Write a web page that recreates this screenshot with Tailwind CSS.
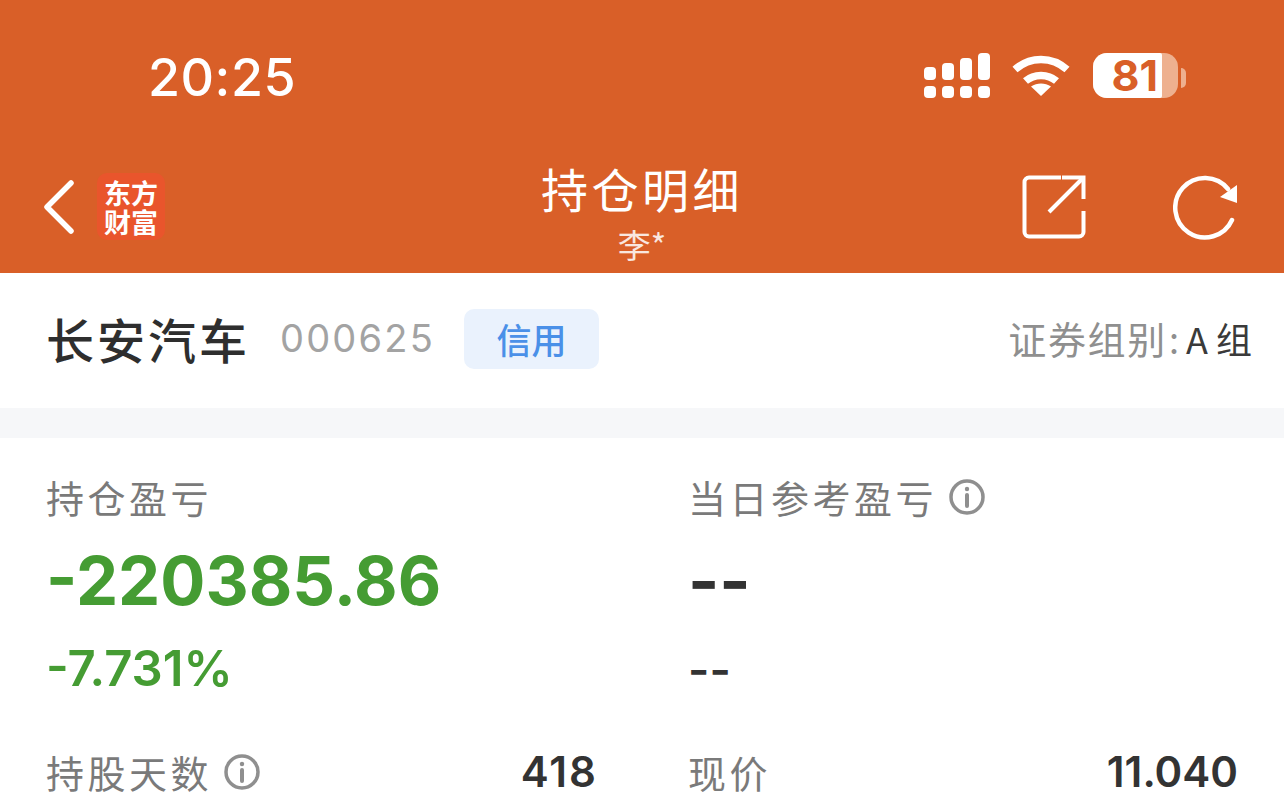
<!DOCTYPE html>
<html lang="zh-CN">
<head>
<meta charset="utf-8">
<script src="https://cdn.jsdelivr.net/npm/@tailwindcss/browser@4"></script>
</head>
<body class="bg-white">
<div class="w-[1284px] h-[812px] overflow-hidden bg-white font-['Inter','Noto_Sans_CJK_SC',sans-serif] text-[#333]">
  <header class="h-[273px] bg-[#d95f28] text-white">
    <div class="h-[150px] relative flex items-start">
      <span class="ml-[148px] mt-[46px] text-[52px] leading-[64px] font-medium tracking-[0.5px]">20:25</span>
      <div class="ml-auto mr-[98px] mt-[53px] flex items-start">
        <svg width="66" height="46" viewBox="0 0 66 46" class="block" fill="#fff">
          <rect x="0" y="14" width="12" height="13" rx="4"/><rect x="18" y="10" width="12" height="17" rx="4"/><rect x="36" y="5" width="12" height="22" rx="4"/><rect x="54" y="0" width="12" height="27" rx="4"/>
          <rect x="0" y="33" width="12" height="12" rx="4"/><rect x="18" y="33" width="12" height="12" rx="4"/><rect x="36" y="33" width="12" height="12" rx="4"/><rect x="54" y="33" width="12" height="12" rx="4"/>
        </svg>
        <svg width="58" height="44" viewBox="0 0 58 44" class="block ml-[22px]" fill="none" stroke="#fff" stroke-width="7.5">
          <path d="M3 16.5C18 3 40 3 55 16.5"/><path d="M13.5 28C22 20.5 36 20.5 44.5 28"/><path d="M29 43L19 33.5C25 29.5 33 29.5 39 33.5Z" fill="#fff" stroke="none"/>
        </svg>
        <div class="ml-[23px] w-[85px] h-[45px] rounded-[14px] flex bg-[#eeb08f]">
          <div class="w-[69px] h-full bg-white rounded-l-[14px] rounded-r-[2px] flex items-center justify-end pr-[4px] text-[#d95f28] text-[43px] leading-[45px] font-bold">81</div>
        </div>
        <div class="ml-[3px] mt-[15px] w-[5px] h-[20px] rounded-r-full bg-[#eeb08f]"></div>
      </div>
    </div>
    <nav class="h-[123px] relative flex items-start">
      <svg width="32" height="54" viewBox="0 0 32 54" class="block ml-[43px] mt-[30px]" fill="none" stroke="#fff" stroke-width="5.5" stroke-linecap="round" stroke-linejoin="round"><path d="M28 3L4 27L28 51"/></svg>
      <div class="ml-[22px] mt-[23px] w-[68px] h-[67px] rounded-[10px] bg-[#e9552c] flex items-center justify-center text-center text-[27px] leading-[29px] font-bold font-['Noto_Sans_CJK_SC',sans-serif]">东方<br>财富</div>
      <div class="absolute left-0 right-0 top-[6px] text-center">
        <div class="text-[47px] leading-[64px] font-['Noto_Sans_CJK_SC',sans-serif] tracking-[3.500px]">持仓明细</div>
        <div class="mt-[5px] text-[33px] leading-[38px] text-white/85 font-['Noto_Sans_CJK_SC',sans-serif]">李*</div>
      </div>
      <svg width="64" height="64" viewBox="0 0 64 64" class="block ml-auto mt-[25px]" fill="none" stroke="#fff" stroke-width="4">
        <path d="M39 2.500H7A4.500 4.500 0 0 0 2.500 7V57A4.500 4.500 0 0 0 7 61.500H57A4.500 4.500 0 0 0 61.500 57V36"/>
        <path d="M27 37L60 4"/><path d="M40 2.500H61.500V24"/>
      </svg>
      <svg width="66" height="66" viewBox="0 0 66 66" class="block ml-[87px] mr-[45px] mt-[25px]" fill="none" stroke="#fff" stroke-width="4.500">
        <path d="M55 14A29.700 29.700 0 1 0 59 45" stroke-linecap="round"/>
        <path d="M64 10V28L47 22Z" fill="#fff" stroke="none"/>
      </svg>
    </nav>
  </header>

  <section class="h-[135px] pl-[46px] pr-[32px] flex items-center pb-[5px]">
    <h1 class="text-[48px] leading-[64px] font-medium font-['Noto_Sans_CJK_SC',sans-serif] text-[#2e2e2e] tracking-[3px]">长安汽车</h1>
    <span class="ml-[30px] text-[38px] leading-[48px] text-[#a3a3a3] tracking-[2.200px]">000625</span>
    <span class="ml-[29px] mt-[2px] w-[135px] h-[60px] rounded-[10px] bg-[#eaf2fd] text-[#4a90e8] text-[35px] leading-[60px] text-center font-medium font-['Noto_Sans_CJK_SC',sans-serif]">信用</span>
    <span class="ml-auto flex items-center text-[36px] leading-[48px] text-[#8f8f8f] font-['Noto_Sans_CJK_SC',sans-serif]"><span class="text-[38px] tracking-[1.700px]">证券组别</span><span class="ml-[2px] mr-[7px]">:</span><span class="text-[#3a3a3a]">A 组</span></span>
  </section>
  <div class="h-[30px] bg-[#f6f7f9]"></div>

  <section class="grid grid-cols-[642px_1fr] pl-[46px] pr-[46px] pt-[32px]">
    <div class="pr-[90px]">
      <div class="h-[54px] text-[38px] leading-[54px] text-[#7a7a7a] font-['Noto_Sans_CJK_SC',sans-serif] tracking-[3.500px]">持仓盈亏</div>
      <div class="h-[82px] mt-[16px] text-[67px] leading-[82px] font-bold text-[#459c33]">-220385.86</div>
      <div class="h-[52px] mt-[21px] text-[49px] leading-[52px] font-semibold text-[#459c33]">-7.731%</div>
      <div class="mt-[50px] flex items-center justify-between h-[54px]">
        <span class="flex items-center text-[38px] leading-[54px] text-[#7a7a7a] font-['Noto_Sans_CJK_SC',sans-serif] tracking-[3.500px]">持股天数
          <svg width="36" height="36" viewBox="0 0 36 36" class="block ml-[12px]" fill="none" stroke="#8f8f8f" stroke-width="3.500"><circle cx="18" cy="18" r="16"/><path d="M18 16V27" stroke-width="4" stroke-linecap="round"/><circle cx="18" cy="10" r="2.200" fill="#8f8f8f" stroke="none"/></svg>
        </span>
        <span class="text-[42px] leading-[54px] font-semibold tracking-[2px] text-[#333]">418</span>
      </div>
    </div>
    <div>
      <div class="flex items-center h-[54px] text-[38px] leading-[54px] text-[#7a7a7a] font-['Noto_Sans_CJK_SC',sans-serif] tracking-[3.500px]">当日参考盈亏
        <svg width="36" height="36" viewBox="0 0 36 36" class="block ml-[12px]" fill="none" stroke="#8f8f8f" stroke-width="3.500"><circle cx="18" cy="18" r="16"/><path d="M18 16V27" stroke-width="4" stroke-linecap="round"/><circle cx="18" cy="10" r="2.200" fill="#8f8f8f" stroke="none"/></svg>
      </div>
      <div class="h-[82px] mt-[16px] text-[67px] leading-[82px] font-bold text-[#333]">--</div>
      <div class="h-[52px] mt-[21px] text-[46px] leading-[52px] font-semibold text-[#333]">--</div>
      <div class="mt-[50px] flex items-center justify-between h-[54px]">
        <span class="text-[38px] leading-[54px] text-[#7a7a7a] font-['Noto_Sans_CJK_SC',sans-serif] tracking-[3.500px]">现价</span>
        <span class="text-[42px] leading-[54px] font-semibold text-[#333]">11.040</span>
      </div>
    </div>
  </section>
</div>
</body>
</html>
